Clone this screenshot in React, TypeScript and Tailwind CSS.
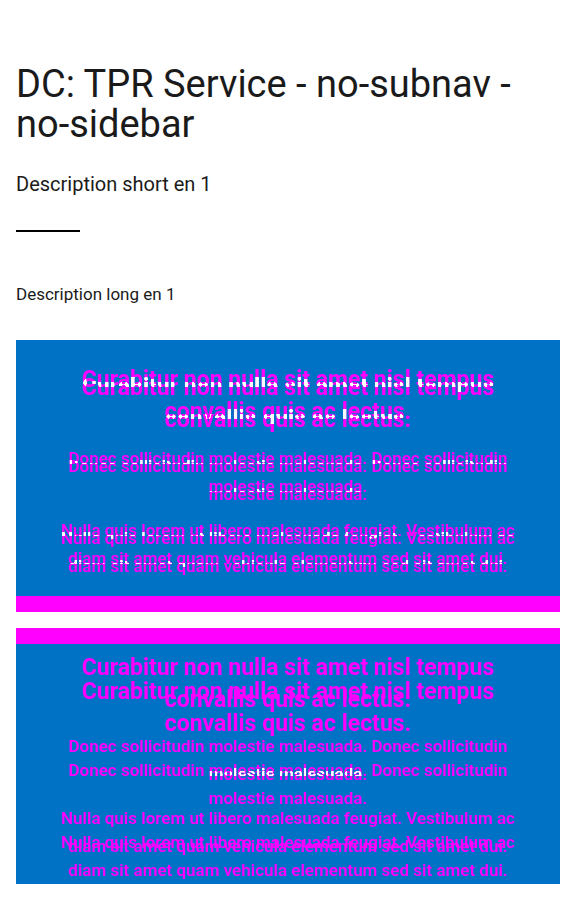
import React from "react";

function Copy({ sparse = false }: { sparse?: boolean }) {
  const tint = sparse ? "text-[#ff00ff]" : "text-[#ff70ff]";
  return (
    <div className="text-center">
      <h2 className={`text-[23px] leading-8 font-bold ${tint}`}>
        Curabitur non nulla sit amet nisl tempus
        <br />
        convallis quis ac lectus.
      </h2>
      <div className="mt-4 flex flex-col gap-4 text-[17px] leading-7 font-semibold">
        <p className="text-[#ff70ff]">
          Donec sollicitudin molestie malesuada. Donec sollicitudin
          <br />
          molestie malesuada.
        </p>
        <p className={tint}>
          Nulla quis lorem ut libero malesuada feugiat. Vestibulum ac
          <br />
          diam sit amet quam vehicula elementum sed sit amet dui.
        </p>
      </div>
    </div>
  );
}

/* Two offset layers: single coverage renders magenta, shared coverage renders white. */
function Overlay({ shift, sparse = false }: { shift: string; sparse?: boolean }) {
  return (
    <div className="relative whitespace-nowrap contrast-[10]">
      <Copy sparse={sparse} />
      <div aria-hidden="true" className={`absolute inset-x-0 mix-blend-screen ${shift}`}>
        <Copy sparse={sparse} />
      </div>
    </div>
  );
}

export default function App() {
  return (
    <main className="bg-white px-4 pt-16 pb-8 font-['Roboto','Liberation_Sans',sans-serif] text-[#1a1a1a]">
      <h1 className="text-[38px] leading-10">DC: TPR Service - no-subnav - no-sidebar</h1>
      <p className="mt-6 text-xl leading-8">Description short en 1</p>
      <hr className="mt-[30px] w-16 border-0 border-t-2 border-black" />
      <p className="mt-12 text-[17px] leading-7">Description long en 1</p>
      <div className="mt-8 flex flex-col gap-4">
        <section className="border-b-16 border-[#ff00ff] bg-[#0072c6] pt-6 pb-6">
          <Overlay shift="top-2" />
        </section>
        <section className="border-t-16 border-[#ff00ff] bg-[#0072c6] pt-2 pb-6">
          <Overlay shift="top-6" sparse />
        </section>
      </div>
    </main>
  );
}
